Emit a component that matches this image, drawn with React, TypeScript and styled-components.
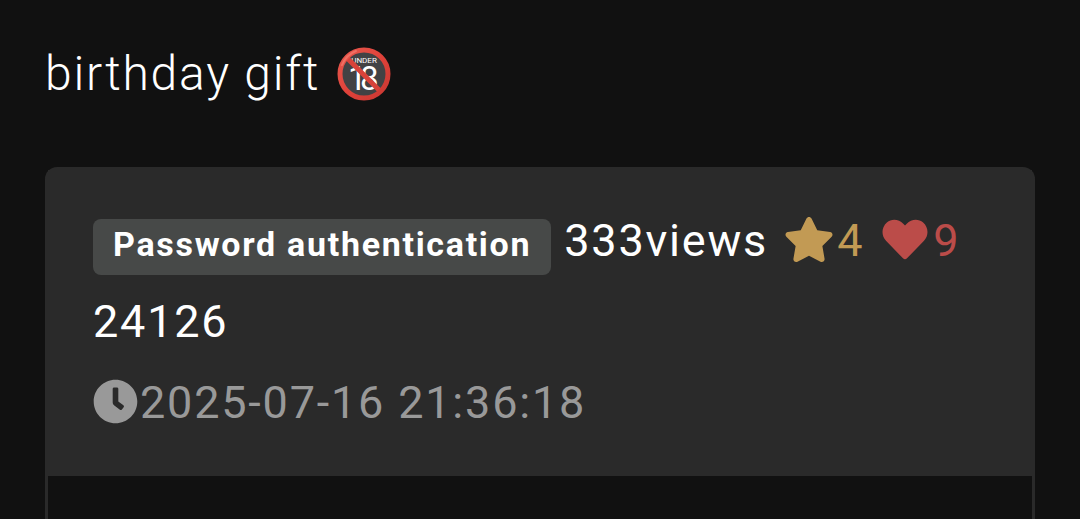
import React from "react";
import styled, { createGlobalStyle } from "styled-components";
import { FaClock, FaHeart, FaStar } from "react-icons/fa";

const GlobalStyle = createGlobalStyle`
  *, *::before, *::after {
    box-sizing: border-box;
  }

  body {
    margin: 0;
    background: #111111;
    color: #ffffff;
    font-family: Roboto, "Liberation Sans", sans-serif;
    font-size: 45px;
    letter-spacing: 0.04em;
  }
`;

const Page = styled.main`
  min-height: 100vh;
  padding: 38px 45px 0;
  display: flex;
  flex-direction: column;
`;

const Title = styled.h1`
  margin: 0 0 57px;
  display: flex;
  align-items: center;
  gap: 16px;
  font-size: 48px;
  font-weight: 300;
  line-height: 72px;
`;

const Under18 = styled.svg`
  flex: none;
  width: 56px;
  height: 56px;
  font-weight: 400;
  letter-spacing: 0;
`;

const Card = styled.article`
  flex: 1;
  display: flex;
  flex-direction: column;
  border: 3px solid #2a2a2a;
  border-bottom: 0;
  border-radius: 12px 12px 0 0;
`;

const CardHeader = styled.header`
  padding: 30px 45px 33px;
  background: #2a2a2a;
  line-height: 81px;
`;

const StatRow = styled.div`
  display: flex;
  flex-wrap: wrap;
  align-items: center;
`;

const Badge = styled.span`
  height: 56px;
  margin: 12px 13px 0 0;
  padding: 0 20px;
  border-radius: 8px;
  background: #474948;
  font-size: 34px;
  font-weight: 700;
  letter-spacing: 0.05em;
  line-height: 50px;
`;

const Stat = styled.span<{ $color: string }>`
  display: inline-flex;
  align-items: center;
  margin-left: 13px;
  color: ${({ $color }) => $color};

  svg {
    width: 56px;
    height: 45px;
    margin-bottom: 2px;
  }
`;

const PostId = styled.div``;

const Posted = styled.time`
  display: flex;
  align-items: center;
  gap: 2px;
  color: #999999;

  svg {
    width: 45px;
    height: 45px;
    margin-bottom: 2px;
  }
`;

const CardBody = styled.div`
  flex: 1;
  min-height: 43px;
`;

function Under18Emoji() {
  return (
    <Under18 viewBox="0 0 56 56" role="img" aria-label="Under 18 prohibited">
      <defs>
        <linearGradient id="ring" x1="0" y1="0" x2="1" y2="1">
          <stop offset="0" stopColor="#e8594e" />
          <stop offset="0.5" stopColor="#df423a" />
          <stop offset="1" stopColor="#c93832" />
        </linearGradient>
      </defs>
      <circle cx="28" cy="28" r="23" fill="#424244" />
      <text x="28" y="17" textAnchor="middle" fontSize="8" fill="#ffffff">
        UNDER
      </text>
      <text x="12 24" y="44" fontSize="33" fill="#ffffff">
        18
      </text>
      <path d="M11 12 44 45" stroke="#d8423a" strokeWidth="5" />
      <circle cx="28" cy="28" r="24" fill="none" stroke="url(#ring)" strokeWidth="5" />
      <path d="M6 19Q10 9 20 5" fill="none" stroke="#f07064" strokeWidth="2" strokeLinecap="round" />
    </Under18>
  );
}

export default function App() {
  return (
    <>
      <GlobalStyle />
      <Page>
        <Title>
          birthday gift
          <Under18Emoji />
        </Title>
        <Card>
          <CardHeader>
            <StatRow>
              <Badge>Password authentication</Badge>
              <span>333views</span>
              <Stat $color="#c29a54">
                <FaStar aria-label="Stars" />4
              </Stat>
              <Stat $color="#bb4c49">
                <FaHeart aria-label="Likes" />9
              </Stat>
            </StatRow>
            <PostId>24126</PostId>
            <Posted dateTime="2025-07-16T21:36:18">
              <FaClock aria-hidden="true" />
              2025-07-16 21:36:18
            </Posted>
          </CardHeader>
          <CardBody />
        </Card>
      </Page>
    </>
  );
}
